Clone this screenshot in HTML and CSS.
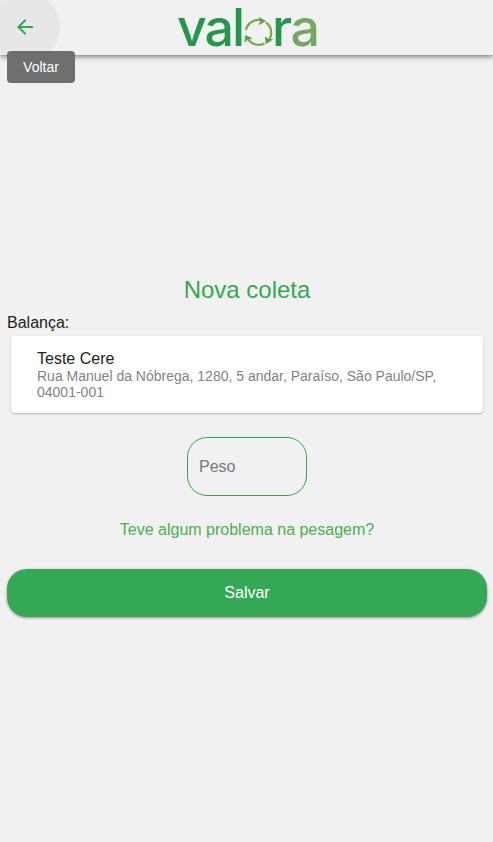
FILE: index.html
```html
<!DOCTYPE html>
<html lang="pt-BR">
<head>
  <meta charset="UTF-8" />
  <meta name="viewport" content="width=device-width, initial-scale=1" />
  <title>Valora - Nova coleta</title>
  <link rel="stylesheet" href="styles.css">
</head>
<body>

  <header class="toolbar">
    <button class="back-button" aria-label="Voltar">
      <svg width="24" height="24" viewBox="0 0 24 24">
        <path d="M20 11H7.83l5.59-5.59L12 4l-8 8 8 8 1.41-1.41L7.83 13H20v-2z" />
      </svg>
    </button>
    <svg class="logo" width="144" height="55" viewBox="0 0 144 55">
      <text class="logo-dark" x="1" y="46" textLength="68" lengthAdjust="spacing">val</text>
      <g class="logo-cycle">
        <path d="M70 30A12.500 12.500 0 0 1 86 20.500" />
        <path d="M90 22.500A12.500 12.500 0 0 1 92 41" />
        <path d="M88.500 43.500A12.500 12.500 0 0 1 71.500 38" />
      </g>
      <g class="logo-tips">
        <path d="M83 17.500l6.500 3.500-6.500 3.500 2-3.500z" />
        <path d="M96.500 39.500l-6.500 4-.500-6.500 2.800 2.500z" />
        <path d="M69 42l.500-6.500 6.500 3-4 .200z" />
      </g>
      <text class="logo-dark" x="96" y="46">r</text>
      <text class="logo-light" x="114.500" y="46">a</text>
    </svg>
  </header>
  <div class="tooltip">Voltar</div>

  <main class="content">
    <h1>Nova coleta</h1>
    <label class="scale-label">Balança:</label>
    <div class="card">
      <div class="card-title">Teste Cere</div>
      <div class="card-address">Rua Manuel da Nóbrega, 1280, 5 andar, Paraíso, São Paulo/SP, 04001-001</div>
    </div>
    <input class="weight" type="text" placeholder="Peso" />
    <a class="problem-link">Teve algum problema na pesagem?</a>
    <button class="save-button">Salvar</button>
  </main>

</body>
</html>
```
FILE: styles.css
```css
body {
  margin: 0;
  min-height: 842px;
  background-color: #f1f1f1;
  font-family: "Liberation Sans", Arial, sans-serif;
  color: #222;
}
.toolbar {
  position: relative;
  display: flex;
  justify-content: center;
  height: 55px;
  box-shadow: 0 1px 6px rgba(0, 0, 0, 0.6);
  background-color: #f1f1f1;
}
.back-button {
  position: absolute;
  top: 0;
  left: 0;
  width: 60px;
  height: 55px;
  padding: 0 0 2px 13px;
  border: none;
  background: radial-gradient(circle at 25px 27px, #e7e7e7 34.5px, transparent 35.5px);
  text-align: left;
}
.back-button svg {
  display: block;
  fill: #34a853;
}
.logo {
  overflow: visible;
  margin-left: 3px;
  font-family: Inter, sans-serif;
  font-size: 52px;
  font-weight: 500;
}
.logo-dark {
  fill: #279550;
}
.logo-light {
  fill: #75a663;
}
.logo-cycle {
  fill: none;
  stroke: #77a955;
  stroke-width: 2.2;
}
.logo-tips {
  fill: #5b9e49;
  stroke: #5b9e49;
  stroke-width: 0.8;
}
.tooltip {
  position: absolute;
  top: 51px;
  left: 7px;
  width: 68px;
  height: 32px;
  border-radius: 4px;
  background-color: #6e6e6e;
  color: white;
  font-size: 14px;
  line-height: 32px;
  text-align: center;
}
.content {
  display: flex;
  flex-direction: column;
  padding: 219px 6px 0 7px;
}
h1 {
  margin: 0;
  color: #34a853;
  font-size: 24px;
  font-weight: normal;
  line-height: 32px;
  text-align: center;
}
.scale-label {
  margin-top: 7px;
  font-size: 16px;
  line-height: 20px;
}
.card {
  box-sizing: border-box;
  height: 77px;
  margin: 3px 4px 0;
  padding: 13px 26px;
  border-radius: 4px;
  background-color: white;
  box-shadow: 0 1px 2px rgba(0, 0, 0, 0.25);
}
.card-title {
  height: 19px;
  font-size: 16px;
  line-height: 20px;
}
.card-address {
  color: #828282;
  font-size: 14px;
  line-height: 16px;
}
.weight {
  align-self: center;
  box-sizing: border-box;
  width: 120px;
  height: 59px;
  margin-top: 24px;
  padding: 0 11px;
  border: 1px solid #34a853;
  border-radius: 20px;
  background: transparent;
  font-family: inherit;
  font-size: 16px;
}
.weight::placeholder {
  color: #777;
}
.problem-link {
  margin-top: 24px;
  color: #4caf50;
  font-size: 16px;
  line-height: 20px;
  text-align: center;
}
.save-button {
  height: 48px;
  margin-top: 28.5px;
  border: none;
  border-radius: 20px;
  background-color: #34a853;
  box-shadow: 0 1px 3px rgba(0, 0, 0, 0.4);
  color: white;
  font-family: inherit;
  font-size: 16px;
}
```
